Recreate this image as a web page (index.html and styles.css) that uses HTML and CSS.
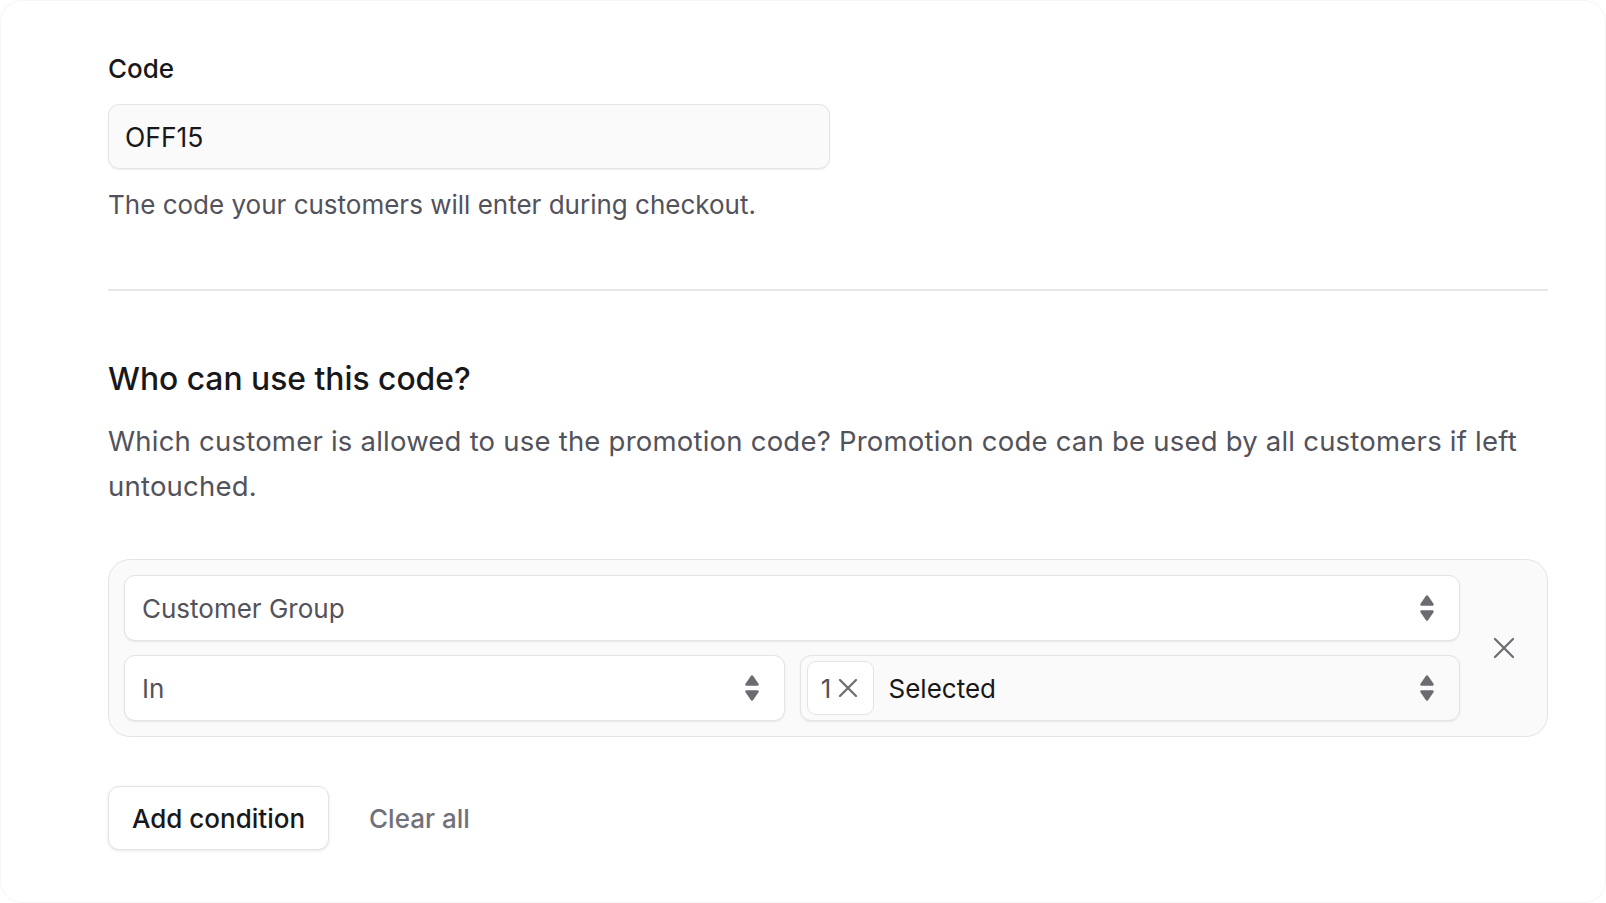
FILE: index.html
```html
<!DOCTYPE html>
<html lang="en">
<head>
    <meta charset="UTF-8">
    <title>Promotion code</title>
    <link rel="stylesheet" href="styles.css">
</head>
<body>
<div class="card">
    <div class="field">
        <div class="label">Code</div>
        <div class="input">OFF15</div>
        <div class="hint">The code your customers will enter during checkout.</div>
    </div>

    <div class="divider"></div>

    <h2 class="title">Who can use this code?</h2>
    <p class="desc">Which customer is allowed to use the promotion code? Promotion code can be used by all customers if left untouched.</p>

    <div class="condition">
        <div class="rows">
            <div class="select">
                <span class="value muted">Customer Group</span>
                <svg class="sort" width="16" height="28" viewBox="0 0 16 28"><path d="M8 2.5 L13.5 10.5 H2.5 Z"/><path d="M8 25.5 L13.5 17.5 H2.5 Z"/></svg>
            </div>
            <div class="pair">
                <div class="select">
                    <span class="value muted">In</span>
                    <svg class="sort" width="16" height="28" viewBox="0 0 16 28"><path d="M8 2.5 L13.5 10.5 H2.5 Z"/><path d="M8 25.5 L13.5 17.5 H2.5 Z"/></svg>
                </div>
                <div class="select with-chip">
                    <span class="chip">1
                        <svg width="22" height="22" viewBox="0 0 22 22"><path d="M3 3 L19 19 M19 3 L3 19"/></svg>
                    </span>
                    <span class="value">Selected</span>
                    <svg class="sort" width="16" height="28" viewBox="0 0 16 28"><path d="M8 2.5 L13.5 10.5 H2.5 Z"/><path d="M8 25.5 L13.5 17.5 H2.5 Z"/></svg>
                </div>
            </div>
        </div>
        <div class="remove">
            <svg width="22" height="22" viewBox="0 0 22 22"><path d="M2 2 L20 20 M20 2 L2 20"/></svg>
        </div>
    </div>

    <div class="actions">
        <div class="btn">Add condition</div>
        <div class="link">Clear all</div>
    </div>
</div>
</body>
</html>
```

FILE: styles.css
```css
*{
    padding: 0;
    margin: 0;
    box-sizing: border-box;
}
body{
    background: #fff;
    font-family: Inter, "Noto Sans", sans-serif;
    color: #18181b;
}
.card{
    height: 903px;
    padding: 50px 57px 0 107px;
    border: 1px solid #f5f5f6;
    border-radius: 22px;
    background: #fff;
}
.label{
    font-size: 26px;
    font-weight: 500;
    line-height: 36px;
    margin-bottom: 17px;
}
.input{
    width: 722px;
    height: 65px;
    padding: 0 16px;
    display: flex;
    align-items: center;
    font-size: 26.5px;
    background: #fafafa;
    border: 1px solid #e4e4e7;
    border-radius: 11px;
    box-shadow: 0 1px 2px rgba(0,0,0,.07);
}
.hint{
    margin-top: 18px;
    font-size: 26px;
    line-height: 36px;
    color: #52525b;
}
.divider{
    height: 2px;
    background: #e7e7ea;
    margin-top: 66px;
}
.title{
    margin-top: 68px;
    font-size: 31.8px;
    font-weight: 500;
    line-height: 40px;
}
.desc{
    margin-top: 20px;
    font-size: 27.5px;
    letter-spacing: 0.22px;
    line-height: 45px;
    color: #52525b;
}
.condition{
    margin-top: 50px;
    display: flex;
    background: #fafafa;
    border: 1px solid #e4e4e7;
    border-radius: 22px;
    padding: 15px 0 15px 15px;
}
.rows{
    flex: 1;
    display: flex;
    flex-direction: column;
    gap: 14px;
}
.pair{
    display: grid;
    grid-template-columns: 1fr 1fr;
    gap: 15px;
}
.select{
    height: 66px;
    display: flex;
    align-items: center;
    padding: 0 24px 0 17px;
    background: #fff;
    border: 1px solid #e4e4e7;
    border-radius: 11px;
    box-shadow: 0 1px 2px rgba(0,0,0,.08);
    font-size: 26px;
}
.select .value{
    flex: 1;
}
.muted{
    color: #52525b;
}
.sort path{
    fill: #6b6b72;
    stroke: #6b6b72;
    stroke-width: 2.5;
    stroke-linejoin: round;
}
.with-chip{
    padding-left: 6px;
    background: #fafafa;
}
.chip{
    height: 54px;
    width: 67px;
    display: flex;
    align-items: center;
    justify-content: center;
    gap: 6px;
    margin-right: 15px;
    background: #fff;
    border: 1px solid #e4e4e7;
    border-radius: 9px;
    color: #52525b;
}
.chip svg path{
    stroke: #6b6b72;
    stroke-width: 2.2;
    stroke-linecap: round;
}
.remove{
    width: 87px;
    display: flex;
    align-items: center;
    justify-content: center;
}
.remove path{
    stroke: #6b6b72;
    stroke-width: 2.2;
    stroke-linecap: round;
}
.actions{
    margin-top: 49px;
    display: flex;
    align-items: center;
    gap: 40px;
}
.btn{
    height: 64px;
    padding: 0 23px;
    display: flex;
    align-items: center;
    font-size: 26px;
    font-weight: 500;
    background: #fff;
    border: 1px solid #e4e4e7;
    border-radius: 11px;
    box-shadow: 0 1px 3px rgba(0,0,0,.1);
}
.link{
    font-size: 26px;
    font-weight: 500;
    color: #71717a;
}
```
